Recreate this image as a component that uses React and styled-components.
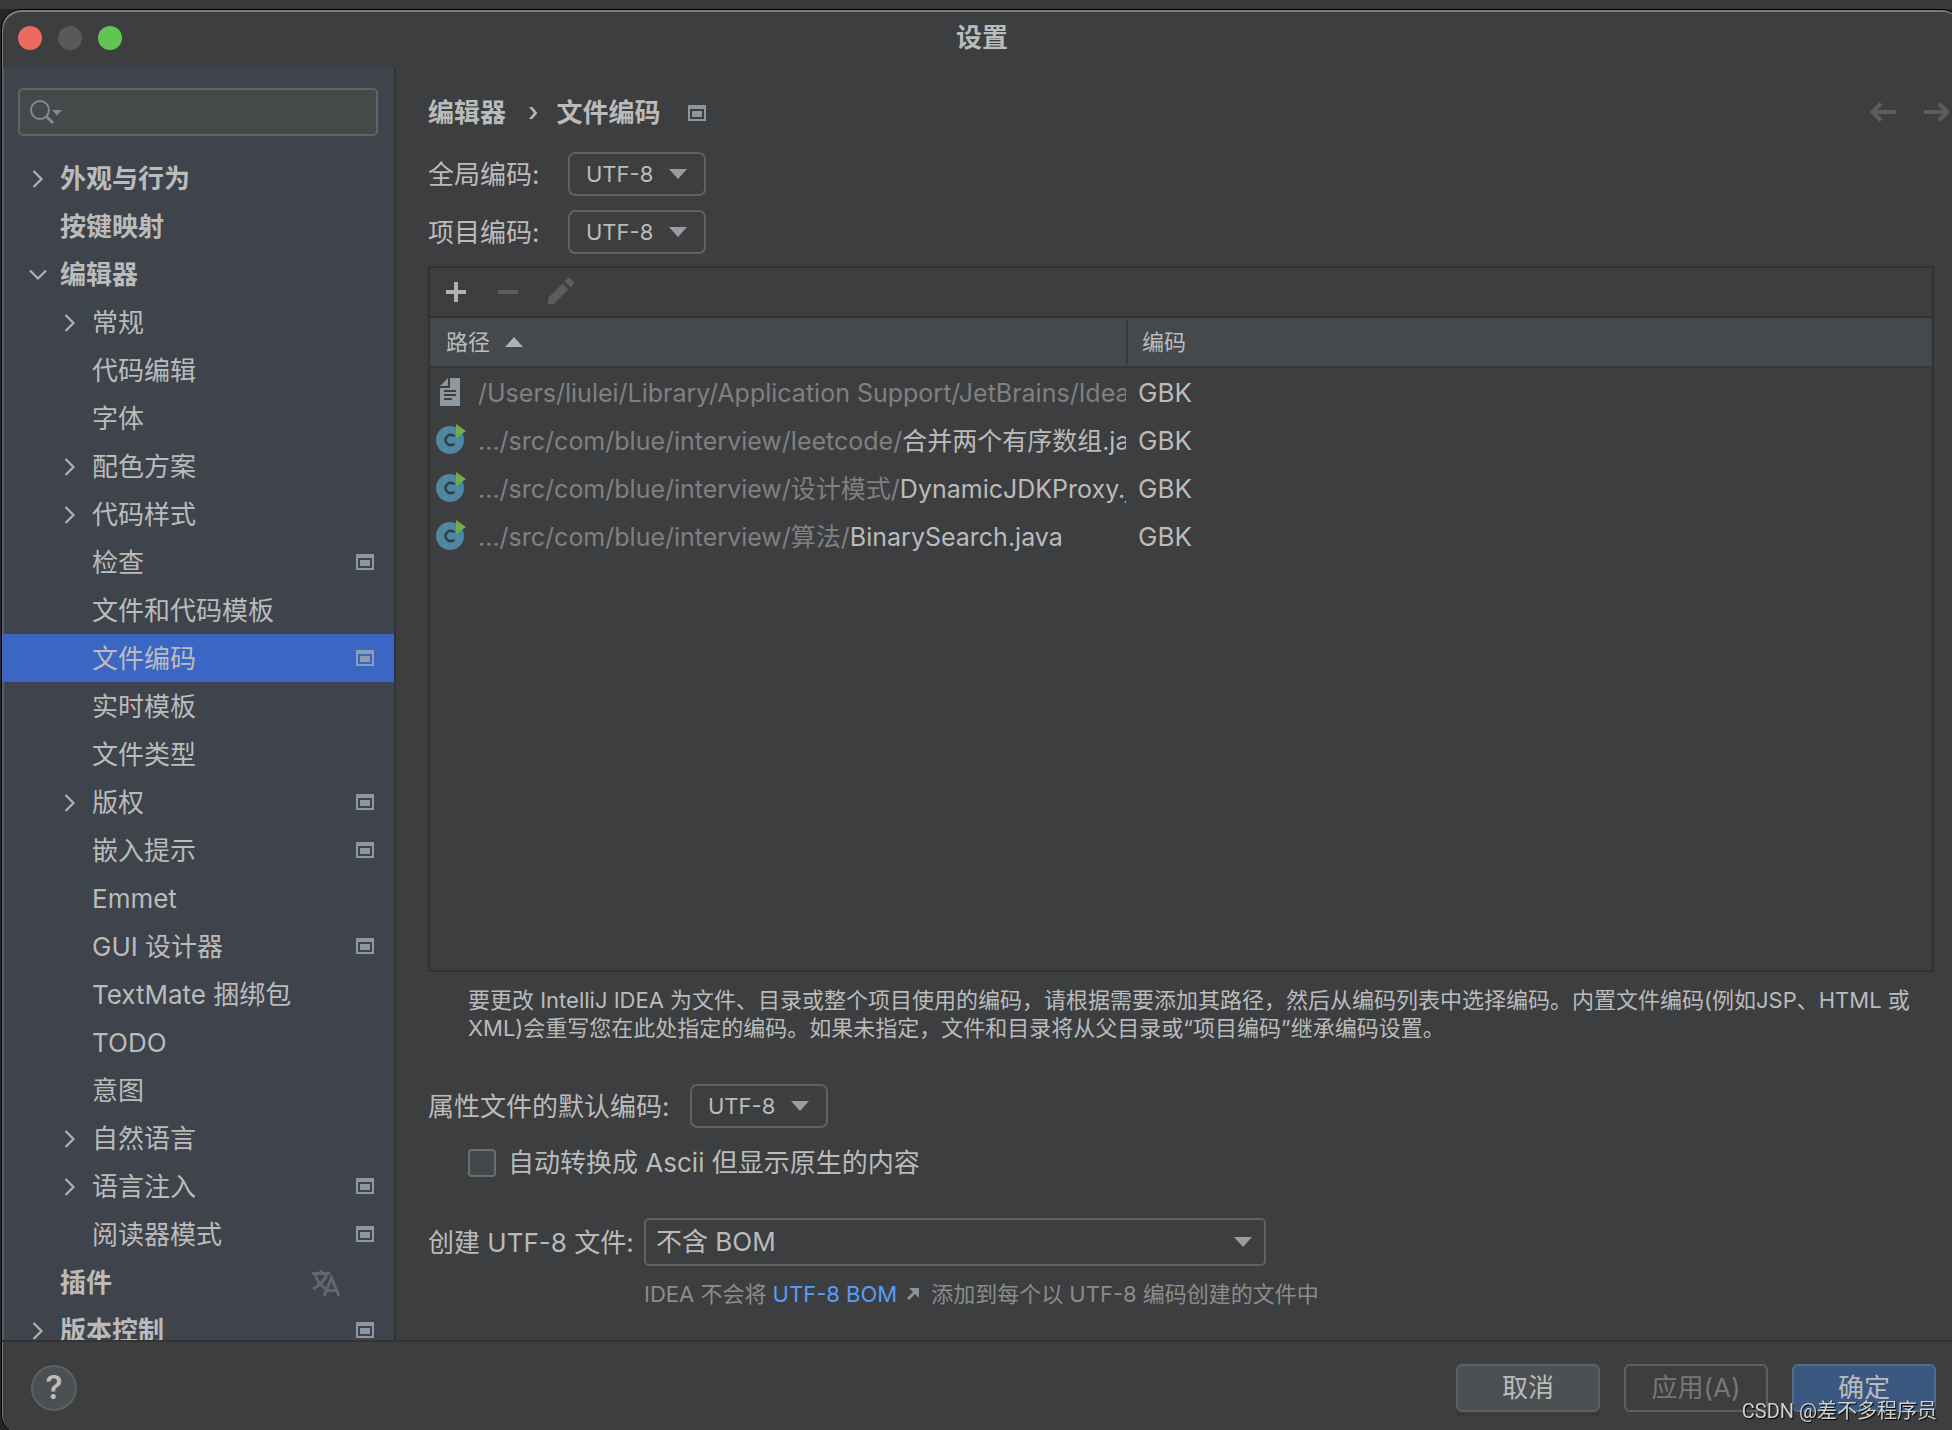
import React from "react";
import styled, { createGlobalStyle, css } from "styled-components";

const GlobalStyle = createGlobalStyle`
  * { box-sizing: border-box; }
  html, body { margin: 0; height: 100%; }
  body {
    overflow: hidden;
    background: #2b2b2d;
    color: #bbbbbb;
    font-family: Inter, "Noto Sans CJK SC", sans-serif;
    font-size: 26px;
    line-height: 32px;
  }
  #root { height: 100%; }
  button, input, select { font: inherit; color: inherit; margin: 0; }
  svg { display: block; flex: none; }
`;

const Desktop = styled.div`
  height: 100vh;
  padding-top: 9px;
  overflow: hidden;
  background: linear-gradient(#38393b 0 9px, #27272a 9px);
`;

const Window = styled.div`
  display: flex;
  flex-direction: column;
  height: calc(100vh - 4px);
  margin: 0 -10px 0 1px;
  padding-right: 9px;
  border: 1px solid #000;
  border-radius: 20px;
  background: #3d3e40;
  box-shadow: inset 1px 2px 0 #7b7b7d;
  overflow: hidden;
`;

const TitleBar = styled.header`
  display: grid;
  grid-template-columns: 1fr auto 1fr;
  align-items: center;
  height: 58px;
  flex: none;
  padding: 0 6px 2px 16px;
`;

const Lights = styled.div`
  display: flex;
  gap: 16px;
`;

const Light = styled.button`
  width: 24px;
  height: 24px;
  padding: 0;
  border: 0;
  border-radius: 50%;
  background: ${(p) => p.$color};
`;

const WindowTitle = styled.h1`
  margin: 0;
  font-size: 26px;
  font-weight: 700;
  line-height: 32px;
`;

const Body = styled.div`
  display: flex;
  flex: 1;
  min-height: 0;
`;

const Sidebar = styled.aside`
  display: flex;
  flex-direction: column;
  width: 394px;
  flex: none;
  padding-top: 20px;
  border-right: 2px solid #323335;
  background: #3f434c;
  box-shadow: inset 2px 0 0 #5a5e66;
  overflow: hidden;
`;

const SearchBox = styled.label`
  display: flex;
  align-items: center;
  gap: 8px;
  height: 48px;
  flex: none;
  margin: 0 16px 18px;
  padding: 0 10px;
  border: 2px solid #616463;
  border-radius: 5px;
  background: #45494a;
`;

const SearchInput = styled.input`
  flex: 1;
  min-width: 0;
  border: 0;
  outline: 0;
  background: transparent;
`;

const Tree = styled.ul`
  margin: 0;
  padding: 0;
  list-style: none;
`;

const TreeRow = styled.li`
  display: flex;
  align-items: center;
  height: 48px;
  padding: 0 20px 0 ${(p) => (p.$level ? 56 : 24)}px;
  font-weight: ${(p) => (p.$level ? 400 : 700)};
  background: ${(p) => (p.$selected ? "#3b66c4" : "transparent")};
`;

const Twisty = styled.span`
  display: flex;
  justify-content: center;
  width: 24px;
  margin-right: 10px;
  padding-top: 2px;
`;

const TreeLabel = styled.span`
  flex: 1;
  padding-top: 2px;
  white-space: nowrap;
`;

const TranslateMark = styled.span`
  margin-right: 34px;
  padding-top: 2px;
`;

const Content = styled.main`
  display: flex;
  flex-direction: column;
  flex: 1;
  min-width: 0;
  padding: 26px 18px 0 32px;
`;

const Crumbs = styled.nav`
  display: flex;
  align-items: center;
  height: 36px;
  margin-right: -16px;
  font-weight: 700;
`;

const Crumb = styled.span`
  padding-top: 2px;
`;

const CrumbSep = styled.span`
  margin: 0 18px 0 22px;
  font-weight: 500;
`;

const CrumbMark = styled.span`
  margin-left: 28px;
  padding-top: 2px;
`;

const NavButtons = styled.div`
  display: flex;
  gap: 28px;
  margin-left: auto;
`;

const IconButton = styled.button`
  display: flex;
  padding: 0;
  border: 0;
  background: transparent;
`;

const Field = styled.div`
  display: flex;
  align-items: center;
  height: ${(p) => p.$height || 44}px;
  margin-top: ${(p) => p.$top || 0}px;
`;

const FieldLabel = styled.label`
  width: ${(p) => (p.$width ? `${p.$width}px` : "auto")};
  flex: none;
  padding-top: 2px;
  white-space: nowrap;
`;

const SelectWrap = styled.span`
  display: grid;
  align-items: center;
  width: ${(p) => (p.$wide ? 622 : 138)}px;
  height: ${(p) => (p.$wide ? 48 : 44)}px;
  & > * { grid-area: 1 / 1; }
  & > svg { justify-self: end; margin-right: ${(p) => (p.$wide ? 14 : 19)}px; pointer-events: none; }
`;

const Select = styled.select`
  appearance: none;
  width: 100%;
  height: 100%;
  padding: ${(p) => (p.$wide ? "0 10px" : "0 16px")};
  border: 2px solid #5f6163;
  border-radius: ${(p) => (p.$wide ? 5 : 7)}px;
  background: transparent;
  font-size: ${(p) => (p.$wide ? 26 : 22)}px;
  outline: 0;
`;

const TablePanel = styled.section`
  display: flex;
  flex-direction: column;
  height: 706px;
  margin-top: 12px;
  flex: none;
  border: 2px solid #323335;
`;

const Toolbar = styled.div`
  display: flex;
  align-items: center;
  gap: 26px;
  height: 50px;
  flex: none;
  padding: 0 13px;
  border-bottom: 2px solid #323335;
`;

const Table = styled.table`
  width: 100%;
  table-layout: fixed;
  border-collapse: separate;
  border-spacing: 0;
`;

const HeadCell = styled.th`
  height: 50px;
  padding: 0 0 0 ${(p) => (p.$last ? 14 : 16)}px;
  border-bottom: 2px solid #34383b;
  background: #45494b;
  font-size: 22px;
  font-weight: 400;
  text-align: left;
  &:first-child { width: 698px; }
`;

const HeadInner = styled.span`
  display: flex;
  align-items: center;
  gap: 15px;
  height: 44px;
  border-right: ${(p) => (p.$divider ? "2px solid #34383b" : "0")};
`;

const Cell = styled.td`
  height: 48px;
  padding: ${(p) => (p.$last ? "2px 0 0 10px" : "0 2px 0 6px")};
  font-size: 26px;
  overflow: hidden;
  white-space: nowrap;
`;

const PathLine = styled.span`
  display: flex;
  align-items: center;
  gap: 12px;
  overflow: hidden;
`;

const PathText = styled.span`
  flex: 1;
  min-width: 0;
  padding-top: 2px;
  color: #808080;
  font-size: 25px;
  overflow: hidden;
`;

const FileName = styled.span`
  color: #bbbbbb;
`;

const Hint = styled.p`
  margin: 14px 0 0 40px;
  font-size: 22px;
  line-height: 28px;
`;

const CheckLabel = styled.label`
  display: flex;
  align-items: center;
  gap: 12px;
  margin: 18px 0 0 40px;
  height: 34px;
`;

const CheckBox = styled.input`
  appearance: none;
  width: 28px;
  height: 28px;
  border: 2px solid #6b6d6e;
  border-radius: 4px;
  background: #43494a;
`;

const Note = styled.p`
  display: flex;
  align-items: center;
  margin: 12px 0 0 216px;
  font-size: 22px;
  line-height: 32px;
  color: #8c8c8c;
  white-space: pre;
`;

const NoteLink = styled.a`
  display: flex;
  align-items: center;
  gap: 10px;
  margin-right: 12px;
  color: #589df6;
  text-decoration: none;
`;

const Footer = styled.footer`
  display: flex;
  align-items: center;
  gap: 24px;
  height: 94px;
  flex: none;
  padding: 0 16px 0 29px;
  border-top: 2px solid #323335;
`;

const HelpButton = styled.button`
  width: 46px;
  height: 46px;
  margin-right: auto;
  padding: 0;
  border: 2px solid #5e6060;
  border-radius: 50%;
  background: #4c5052;
  font-size: 32px;
  font-weight: 600;
  line-height: 40px;
`;

const Button = styled.button`
  width: 144px;
  height: 48px;
  padding: 0;
  border: 2px solid #5e6060;
  border-radius: 6px;
  background: #4c5052;
  box-shadow: 0 4px 0 #38393b;
  ${(p) => p.$variant === "disabled" && css`
    background: transparent;
    color: #777777;
    box-shadow: none;
  `}
  ${(p) => p.$variant === "primary" && css`
    border-color: #4c708c;
    background: #3a5880;
    box-shadow: none;
  `}
`;

const Watermark = styled.div`
  position: fixed;
  right: 15px;
  bottom: 4px;
  font-family: Roboto, "Noto Sans CJK SC", sans-serif;
  font-size: 20px;
  line-height: 30px;
  color: #d0d0d0;
  text-shadow: 1px 1px 1px #000;
  pointer-events: none;
`;

const Chevron = ({ open }) =>
  open ? (
    <svg width="20" height="12" viewBox="0 0 20 12" fill="none" stroke="#afb1b3" strokeWidth="2.2">
      <path d="M2 1.5 10 9.5 18 1.5" />
    </svg>
  ) : (
    <svg width="12" height="20" viewBox="0 0 12 20" fill="none" stroke="#afb1b3" strokeWidth="2.2">
      <path d="M1.5 2 9.5 10 1.5 18" />
    </svg>
  );

const ProjectMark = () => (
  <svg width="18" height="16" viewBox="0 0 18 16" fill="#9aa7b0" opacity="0.85">
    <path fillRule="evenodd" d="M0 0H18V16H0ZM2 4V14H16V4Z" />
    <path d="M4 6H14V12H4Z" />
  </svg>
);

const SearchIcon = () => (
  <svg width="32" height="24" viewBox="0 0 32 24">
    <circle cx="10" cy="10" r="9" fill="none" stroke="#7f8b91" strokeWidth="2" />
    <path d="M16 16 23 23" stroke="#7f8b91" strokeWidth="3" />
    <path d="M22 10H32L27 15.500Z" fill="#7f8b91" />
  </svg>
);

const Caret = ({ up }) => (
  <svg width="18" height="10" viewBox="0 0 18 10" fill={up ? "#afb1b3" : "#9a9da0"}>
    <path d={up ? "M9 0 18 10H0Z" : "M0 0H18L9 10Z"} />
  </svg>
);

const TranslateIcon = () => (
  <svg width="28" height="28" viewBox="0 0 28 28" fill="none" stroke="#62666f" strokeWidth="3">
    <path d="M0 4.500H18M9 1V5M3 5C5 12 9 17 14 20M15 5C13 11 8 16 1 20" />
    <path d="M12 27 19.500 9 27 27M15 21.500H24" />
  </svg>
);

const Arrow = ({ right }) => (
  <svg width="26" height="20" viewBox="0 0 26 20" fill="none" stroke="#5c5d5e">
    <path strokeWidth="4" d={right ? "M0 10H24" : "M26 10H2"} />
    <path strokeWidth="4" d={right ? "M15 1.500 23.500 10 15 18.500" : "M11 1.500 2.500 10 11 18.500"} />
  </svg>
);

const PlusIcon = () => (
  <svg width="26" height="26" viewBox="0 0 26 26" fill="#afb1b3">
    <path d="M11 3H15V11H23V15H15V23H11V15H3V11H11Z" />
  </svg>
);

const MinusIcon = () => (
  <svg width="26" height="26" viewBox="0 0 26 26" fill="#5c5d5e">
    <path d="M3 11H23V15H3Z" />
  </svg>
);

const PencilIcon = () => (
  <svg width="28" height="28" viewBox="-1 0 28 28" fill="#5c5d5e">
    <path d="M0 20 14.500 5.500 20.500 11.500 6 26H0Z" />
    <path d="M16.500 3.500 19 1Q21 -1 23 1L25 3Q27 5 25 7L22.500 9.500Z" />
  </svg>
);

const TextFileIcon = () => (
  <svg width="30" height="28" viewBox="0 0 30 28" fill="#8d98a1">
    <path d="M4 8 12 0V8Z" />
    <path fillRule="evenodd" d="M14 0H24V28H4V10H14ZM8 12V14H20V12ZM8 16V18H20V16ZM8 20V22H16V20Z" />
  </svg>
);

const ClassIcon = () => (
  <svg width="30" height="32" viewBox="0 0 30 32">
    <circle cx="14" cy="16" r="14" fill="#4f87a0" />
    <path d="M18.500 12.400A5.200 5.200 0 1 0 18.500 19.600" fill="none" stroke="#2c3f49" strokeWidth="2.400" />
    <path d="M20 0 30 7 20 14Z" fill="#72ab4c" />
  </svg>
);

const LinkArrow = () => (
  <svg width="12" height="12" viewBox="0 0 12 12">
    <path d="M1 11 9 3" stroke="#87939a" strokeWidth="3" />
    <path d="M2 0H12V10Z" fill="#87939a" />
  </svg>
);

const TREE = [
  { text: "外观与行为", level: 0, open: false },
  { text: "按键映射", level: 0 },
  { text: "编辑器", level: 0, open: true },
  { text: "常规", level: 1, open: false },
  { text: "代码编辑", level: 1 },
  { text: "字体", level: 1 },
  { text: "配色方案", level: 1, open: false },
  { text: "代码样式", level: 1, open: false },
  { text: "检查", level: 1, mark: true },
  { text: "文件和代码模板", level: 1 },
  { text: "文件编码", level: 1, mark: true, selected: true },
  { text: "实时模板", level: 1 },
  { text: "文件类型", level: 1 },
  { text: "版权", level: 1, open: false, mark: true },
  { text: "嵌入提示", level: 1, mark: true },
  { text: "Emmet", level: 1 },
  { text: "GUI 设计器", level: 1, mark: true },
  { text: "TextMate 捆绑包", level: 1 },
  { text: "TODO", level: 1 },
  { text: "意图", level: 1 },
  { text: "自然语言", level: 1, open: false },
  { text: "语言注入", level: 1, open: false, mark: true },
  { text: "阅读器模式", level: 1, mark: true },
  { text: "插件", level: 0, translate: true },
  { text: "版本控制", level: 0, open: false, mark: true },
];

const PATHS = [
  { dir: "/Users/liulei/Library/Application Support/JetBrains/Idea", name: "", encoding: "GBK" },
  { dir: ".../src/com/blue/interview/leetcode/", name: "合并两个有序数组.java", encoding: "GBK" },
  { dir: ".../src/com/blue/interview/设计模式/", name: "DynamicJDKProxy.java", encoding: "GBK" },
  { dir: ".../src/com/blue/interview/算法/", name: "BinarySearch.java", encoding: "GBK" },
];

const Dropdown = ({ id, value, wide }) => (
  <SelectWrap $wide={wide}>
    <Select id={id} $wide={wide} defaultValue={value}>
      <option>{value}</option>
    </Select>
    <Caret />
  </SelectWrap>
);

export default function App() {
  return (
    <Desktop>
      <GlobalStyle />
      <Window>
        <TitleBar>
          <Lights>
            <Light $color="#ed6a5e" aria-label="关闭" />
            <Light $color="#58595b" aria-label="最小化" />
            <Light $color="#61c554" aria-label="缩放" />
          </Lights>
          <WindowTitle>设置</WindowTitle>
        </TitleBar>
        <Body>
          <Sidebar>
            <SearchBox>
              <SearchIcon />
              <SearchInput type="text" aria-label="搜索" />
            </SearchBox>
            <Tree>
              {TREE.map((item) => (
                <TreeRow key={item.text} $level={item.level} $selected={item.selected}>
                  <Twisty>{item.open !== undefined && <Chevron open={item.open} />}</Twisty>
                  <TreeLabel>{item.text}</TreeLabel>
                  {item.translate && <TranslateMark><TranslateIcon /></TranslateMark>}
                  {item.mark && <ProjectMark />}
                </TreeRow>
              ))}
            </Tree>
          </Sidebar>
          <Content>
            <Crumbs>
              <Crumb>编辑器</Crumb>
              <CrumbSep>›</CrumbSep>
              <Crumb>文件编码</Crumb>
              <CrumbMark><ProjectMark /></CrumbMark>
              <NavButtons>
                <IconButton aria-label="后退"><Arrow /></IconButton>
                <IconButton aria-label="前进"><Arrow right /></IconButton>
              </NavButtons>
            </Crumbs>
            <Field $top={22}>
              <FieldLabel htmlFor="global" $width={140}>全局编码:</FieldLabel>
              <Dropdown id="global" value="UTF-8" />
            </Field>
            <Field $top={14}>
              <FieldLabel htmlFor="project" $width={140}>项目编码:</FieldLabel>
              <Dropdown id="project" value="UTF-8" />
            </Field>
            <TablePanel>
              <Toolbar>
                <IconButton aria-label="添加"><PlusIcon /></IconButton>
                <IconButton aria-label="移除"><MinusIcon /></IconButton>
                <IconButton aria-label="编辑"><PencilIcon /></IconButton>
              </Toolbar>
              <Table>
                <thead>
                  <tr>
                    <HeadCell><HeadInner $divider>路径<Caret up /></HeadInner></HeadCell>
                    <HeadCell $last><HeadInner>编码</HeadInner></HeadCell>
                  </tr>
                </thead>
                <tbody>
                  {PATHS.map((row) => (
                    <tr key={row.dir}>
                      <Cell>
                        <PathLine>
                          {row.name ? <ClassIcon /> : <TextFileIcon />}
                          <PathText>{row.dir}<FileName>{row.name}</FileName></PathText>
                        </PathLine>
                      </Cell>
                      <Cell $last>{row.encoding}</Cell>
                    </tr>
                  ))}
                </tbody>
              </Table>
            </TablePanel>
            <Hint>
              要更改 IntelliJ IDEA 为文件、目录或整个项目使用的编码，请根据需要添加其路径，然后从编码列表中选择编码。内置文件编码(例如JSP、HTML 或 XML)会重写您在此处指定的编码。如果未指定，文件和目录将从父目录或“项目编码”继承编码设置。
            </Hint>
            <Field $top={42}>
              <FieldLabel htmlFor="props" $width={262}>属性文件的默认编码:</FieldLabel>
              <Dropdown id="props" value="UTF-8" />
            </Field>
            <CheckLabel>
              <CheckBox type="checkbox" />
              自动转换成 Ascii 但显示原生的内容
            </CheckLabel>
            <Field $top={38} $height={48}>
              <FieldLabel htmlFor="bom" $width={216}>创建 UTF-8 文件:</FieldLabel>
              <Dropdown id="bom" value="不含 BOM" wide />
            </Field>
            <Note>
              {"IDEA 不会将 "}
              <NoteLink href="#bom">UTF-8 BOM<LinkArrow /></NoteLink>
              {"添加到每个以 UTF-8 编码创建的文件中"}
            </Note>
          </Content>
        </Body>
        <Footer>
          <HelpButton aria-label="帮助">?</HelpButton>
          <Button>取消</Button>
          <Button $variant="disabled">应用(A)</Button>
          <Button $variant="primary">确定</Button>
        </Footer>
      </Window>
      <Watermark>CSDN @差不多程序员</Watermark>
    </Desktop>
  );
}
